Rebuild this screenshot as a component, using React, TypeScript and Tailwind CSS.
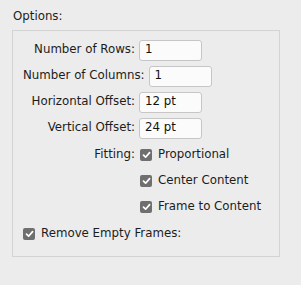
import React from "react";

function Check() {
  return (
    <span className="flex h-[12px] w-[12px] items-center justify-center rounded-[2px] bg-[#6f6f6f]">
      <svg width="9" height="8" viewBox="0 0 9 8">
        <path d="M1.5 4.2 L3.6 6.2 L7.6 1.6" fill="none" stroke="#fff" strokeWidth="1.7" strokeLinecap="round" strokeLinejoin="round" />
      </svg>
    </span>
  );
}

function InputRow({ label, value }: { label: string; value: string }) {
  return (
    <div className="flex h-[26px] items-center">
      <div className="min-w-[112px] whitespace-nowrap text-right">{label}</div>
      <div className="ml-[4px] flex h-[21px] w-[63px] items-center rounded-[3px] border border-[#c6c6c6] bg-[#fbfbfb] pl-[5px] text-[#111]">
        {value}
      </div>
    </div>
  );
}

function CheckRow({ label, text }: { label: string; text: string }) {
  return (
    <div className="flex h-[26px] items-center">
      <div className="min-w-[112px] whitespace-nowrap text-right">{label}</div>
      <div className="ml-[5px] flex items-center gap-[6px]">
        <Check />
        <span>{text}</span>
      </div>
    </div>
  );
}

export default function App() {
  return (
    <div
      className="h-[285px] w-[301px] bg-[#ececec] text-[11.8px] text-[#1c1c1c]"
      style={{ fontFamily: '"DejaVu Sans", sans-serif' }}
    >
      <div className="pl-[13px] pt-[8px] leading-[16px]">Options:</div>
      <div className="ml-[12px] mt-[6px] w-[268px] border border-[#d3d3d3] pb-[9px] pl-[10px] pt-[6px]">
        <InputRow label="Number of Rows:" value="1" />
        <InputRow label="Number of Columns:" value="1" />
        <InputRow label="Horizontal Offset:" value="12 pt" />
        <InputRow label="Vertical Offset:" value="24 pt" />
        <div className="mt-[1px]">
          <CheckRow label="Fitting:" text="Proportional" />
          <CheckRow label="" text="Center Content" />
          <CheckRow label="" text="Frame to Content" />
        </div>
        <div className="mt-[1px] flex h-[26px] items-center gap-[6px]">
          <Check />
          <span>Remove Empty Frames:</span>
        </div>
      </div>
    </div>
  );
}
